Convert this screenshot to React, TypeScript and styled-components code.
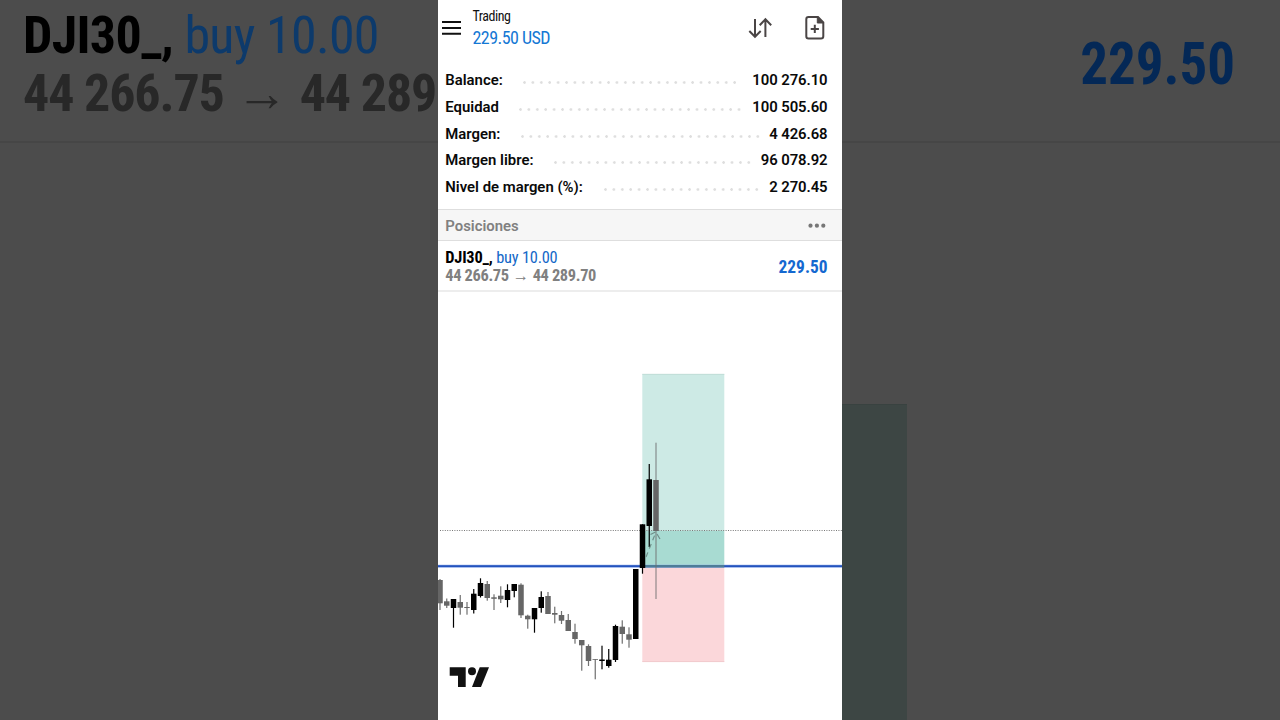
import React from "react";
import styled, { createGlobalStyle } from "styled-components";

const PageStyle = createGlobalStyle`
  * {
    box-sizing: border-box;
  }
  body {
    margin: 0;
    background: #4c4c4c;
    font-family: Roboto, "Liberation Sans", sans-serif;
    overflow: hidden;
  }
`;

const condensed = `
  font-family: "Roboto Condensed", Roboto, "Liberation Sans", sans-serif;
  font-stretch: 75%;
  white-space: pre;
`;

const Page = styled.div`
  display: flex;
  width: 1280px;
  height: 720px;
`;

const Side = styled.aside`
  width: 438px;
  height: 720px;
  background: #4c4c4c;
  overflow: hidden;
`;

const SideTop = styled.div<{ $right?: boolean }>`
  display: flex;
  flex-direction: column;
  align-items: ${(p) => (p.$right ? "flex-end" : "flex-start")};
  height: 143px;
  padding: ${(p) => (p.$right ? "29px 45px 0 0" : "7px 0 0 23px")};
  border-bottom: 2px solid #464646;
`;

const SideLine = styled.div<{ $color: string }>`
  ${condensed}
  font-size: 52px;
  font-weight: 700;
  line-height: 58px;
  letter-spacing: -0.7px;
  color: ${(p) => p.$color};
`;

const SideBuy = styled.span`
  font-weight: 400;
  color: #0d3a6b;
`;

const SideProfit = styled.div`
  ${condensed}
  font-size: 60px;
  font-weight: 700;
  line-height: 70px;
  color: #042856;
  transform: scaleX(0.915);
  transform-origin: right;
`;

const Price = styled.span<{ $spacing: number }>`
  letter-spacing: ${(p) => p.$spacing}px;
`;

const Arrow = styled.span`
  letter-spacing: 0;
`;

const SideZone = styled.div`
  width: 64.5px;
  height: 316px;
  margin-top: 261px;
  background: #3d4644;
  border-top: 1px solid #394240;
`;

const Phone = styled.main`
  display: flex;
  flex-direction: column;
  width: 404px;
  height: 720px;
  background: #fff;
`;

const Header = styled.header`
  display: flex;
  height: 67px;
  padding: 8px 17px 0 4px;
`;

const Titles = styled.div`
  flex: 1;
  margin-left: 10.5px;
  ${condensed}
`;

const Title = styled.div`
  font-size: 14px;
  line-height: 17px;
  letter-spacing: -0.5px;
  color: #111;
`;

const Profit = styled.div`
  margin-top: 2px;
  font-size: 18px;
  line-height: 22px;
  letter-spacing: -0.55px;
  color: #1478d4;
`;

const Summary = styled.section`
  height: 142px;
  padding: 0 14.5px 0 7.3px;
`;

const SummaryRow = styled.div`
  display: flex;
  align-items: center;
  height: 26.7px;
  font-size: 14.9px;
  font-weight: 600;
  color: #0a0a0a;
  white-space: pre;
`;

const Value = styled.span`
  letter-spacing: -0.08px;
`;

const Dots = styled.div<{ $left: number; $right: number }>`
  flex: 1;
  height: 3px;
  margin: 5px ${(p) => p.$right}px 0 ${(p) => p.$left}px;
  background: radial-gradient(circle at 1.5px 1.5px, #dedede 1px, transparent 1.6px) 0 0 / 8.42px 3px repeat-x;
`;

const SectionBar = styled.div`
  display: flex;
  align-items: center;
  justify-content: space-between;
  height: 32px;
  padding: 2px 16px 0 7.3px;
  border-top: 1px solid #dedede;
  border-bottom: 1px solid #dedede;
  background: #f6f6f6;
  font-size: 14.9px;
  font-weight: 600;
  color: #808080;
`;

const Position = styled.div`
  display: flex;
  align-items: center;
  justify-content: space-between;
  height: 51px;
  padding: 2px 14px 0 7.3px;
  border-bottom: 2px solid #ededed;
  ${condensed}
`;

const PositionLine = styled.div<{ $color: string }>`
  font-size: 16.4px;
  line-height: 18px;
  font-weight: 700;
  letter-spacing: -0.22px;
  color: ${(p) => p.$color};
`;

const Buy = styled.span`
  font-weight: 400;
  color: #1468c8;
`;

const PositionProfit = styled.div`
  margin-bottom: 1px;
  font-size: 19px;
  font-weight: 700;
  color: #1468d0;
  transform: scaleX(0.915);
  transform-origin: right;
`;

const rows = [
  { label: "Balance:", value: "100 276.10", left: 20.5, right: 14 },
  { label: "Equidad", value: "100 505.60", left: 20.5, right: 9 },
  { label: "Margen:", value: "4 426.68", left: 20.5, right: 8 },
  { label: "Margen libre:", value: "96 078.92", left: 21, right: 9 },
  { label: "Nivel de margen (%):", value: "2 270.45", left: 21.5, right: 8 },
];

// [body top, body bottom, wick top, wick bottom, rising]
const candles: [number, number, number, number, number][] = [
  [580, 603.3, 579, 610, 0],
  [601.3, 605.7, 598.5, 608, 0],
  [599, 608, 599, 627.7, 1],
  [602, 607.7, 595, 614.7, 0],
  [607, 608, 602, 614.7, 0],
  [593.7, 610, 589, 613.5, 1],
  [583, 596, 578.3, 597.5, 1],
  [584, 598, 581, 600.7, 0],
  [597.3, 598.8, 594.3, 610, 0],
  [595.7, 599.3, 586.3, 603, 0],
  [590, 600, 584.3, 607.3, 1],
  [584, 591, 584, 597.3, 1],
  [584.7, 615.3, 583.3, 618, 0],
  [615.7, 619.3, 614.7, 628.7, 0],
  [608, 619.3, 608, 632.7, 1],
  [597, 608, 591.3, 612.7, 1],
  [596, 614, 592, 614, 0],
  [613, 614.7, 606.7, 623.3, 0],
  [615, 620.7, 611, 624, 0],
  [620, 631, 614, 631, 0],
  [632, 639, 623.7, 643.7, 0],
  [640, 645.3, 640, 670.7, 0],
  [646, 661, 644.3, 666, 0],
  [659.2, 660, 659.2, 679.3, 0],
  [659.5, 661, 645.7, 669.3, 1],
  [659.7, 666, 649, 667.7, 1],
  [626, 660, 624.7, 662, 1],
  [626.7, 634, 620.3, 643.7, 0],
  [634.3, 639.7, 627.3, 647.7, 0],
  [569, 639, 569, 639, 1],
  [524.3, 568, 524.3, 573.7, 1],
  [479.3, 526, 464, 547, 1],
  [480, 531, 442.7, 599, 0],
];

const Chart = () => (
  <svg width="404" height="428" viewBox="438 292 404 428">
    <rect x="642.3" y="374" width="82" height="156.5" fill="#cdeae5" />
    <rect x="642.3" y="530.5" width="82" height="36" fill="#a8dbd2" />
    <rect x="642.3" y="567" width="82" height="95" fill="#fbd7da" />
    <path d="M642.3 374.3H724.3" stroke="#b9d6d1" strokeWidth="0.7" />
    <path d="M642.3 661.6H724.3" stroke="#ecc4c8" strokeWidth="0.7" />
    <path d="M438 566.3H842" stroke="#8fabea" strokeWidth="3" />
    <path d="M438 566.2H842" stroke="#2453bd" strokeWidth="1.8" />
    <path d="M643 566.3H724.3" stroke="#4d7d98" strokeWidth="2.4" />
    <path d="M440 530.5H842" stroke="#777" strokeWidth="1" strokeDasharray="1 1.4" />
    {candles.map(([top, bottom, high, low, up], i) => {
      const x = 440 + i * 6.75;
      const last = i === candles.length - 1;
      return (
        <g key={i}>
          <rect
            x={x - 0.6}
            y={high}
            width={1.2}
            height={low - high}
            fill={up ? "#000" : "#707070"}
            opacity={last ? 0.75 : 1}
          />
          <rect x={x - 2.75} y={top} width={5.5} height={bottom - top} fill={up ? "#000" : "#666"} />
        </g>
      );
    })}
    <path d="M646 557L656 532" stroke="#6f8f89" strokeWidth="1.2" strokeDasharray="5 4" fill="none" />
    <path d="M650.5 534.5L655.5 532M657 534L660 539" stroke="#6f8f89" strokeWidth="1.2" fill="none" />
    <path d="M449.7 667.3H465.7V687H458V675.7H449.7Z" fill="#111" />
    <circle cx="472" cy="671.3" r="4" fill="#111" />
    <path d="M479.7 667.3H489L481 687H472Z" fill="#111" />
  </svg>
);

const MenuIcon = () => (
  <svg width="20" height="40" viewBox="442 8 20 40">
    <path d="M442 22H461M442 28H461M442 33.8H461" stroke="#111" strokeWidth="2.1" />
  </svg>
);

const ActionIcons = () => (
  <svg width="80" height="40" viewBox="745 8 80 40" fill="none" stroke="#4a4545">
    <path d="M755 19V36.5M749.3 31L755 36.8L760.7 31" strokeWidth="2" />
    <path d="M765.4 37V19.5M759.7 25.3L765.4 19.3L771.2 25.3" strokeWidth="2" />
    <path
      d="M818 17H808.5Q806.3 17 806.3 19.2V36.2Q806.3 38.4 808.5 38.4H821Q823.3 38.4 823.3 36.2V22.3Z"
      strokeWidth="2"
    />
    <path d="M817.3 17V23H823.5Z" fill="#4a4545" strokeWidth="1" />
    <path d="M814.8 24.8V33M810.7 28.9H818.9" strokeWidth="2" />
  </svg>
);

const MoreIcon = () => (
  <svg width="18" height="6" viewBox="0 0 18 6" fill="#777">
    <circle cx="2.5" cy="2.7" r="2.1" />
    <circle cx="8.9" cy="2.7" r="2.1" />
    <circle cx="15.3" cy="2.7" r="2.1" />
  </svg>
);

const App = () => {
  return (
    <>
      <PageStyle />
      <Page>
        <Side>
          <SideTop>
            <SideLine $color="#000">
              DJI30_, <SideBuy>buy 10.00</SideBuy>
            </SideLine>
            <SideLine $color="#282828">
              <Price $spacing={-1.15}>44 266.75</Price>
              <Arrow> → </Arrow>
              <Price $spacing={-1.15}>44 289</Price>
            </SideLine>
          </SideTop>
        </Side>
        <Phone>
          <Header>
            <MenuIcon />
            <Titles>
              <Title>Trading</Title>
              <Profit>229.50 USD</Profit>
            </Titles>
            <ActionIcons />
          </Header>
          <Summary>
            {rows.map((row) => (
              <SummaryRow key={row.label}>
                <span>{row.label}</span>
                <Dots $left={row.left} $right={row.right} />
                <Value>{row.value}</Value>
              </SummaryRow>
            ))}
          </Summary>
          <SectionBar>
            <span>Posiciones</span>
            <MoreIcon />
          </SectionBar>
          <Position>
            <div>
              <PositionLine $color="#000">
                DJI30_, <Buy>buy 10.00</Buy>
              </PositionLine>
              <PositionLine $color="#808080">
                <Price $spacing={-0.35}>44 266.75</Price>
                <Arrow> → </Arrow>
                <Price $spacing={-0.35}>44 289.70</Price>
              </PositionLine>
            </div>
            <PositionProfit>229.50</PositionProfit>
          </Position>
          <Chart />
        </Phone>
        <Side>
          <SideTop $right>
            <SideProfit>229.50</SideProfit>
          </SideTop>
          <SideZone />
        </Side>
      </Page>
    </>
  );
};

export default App;
